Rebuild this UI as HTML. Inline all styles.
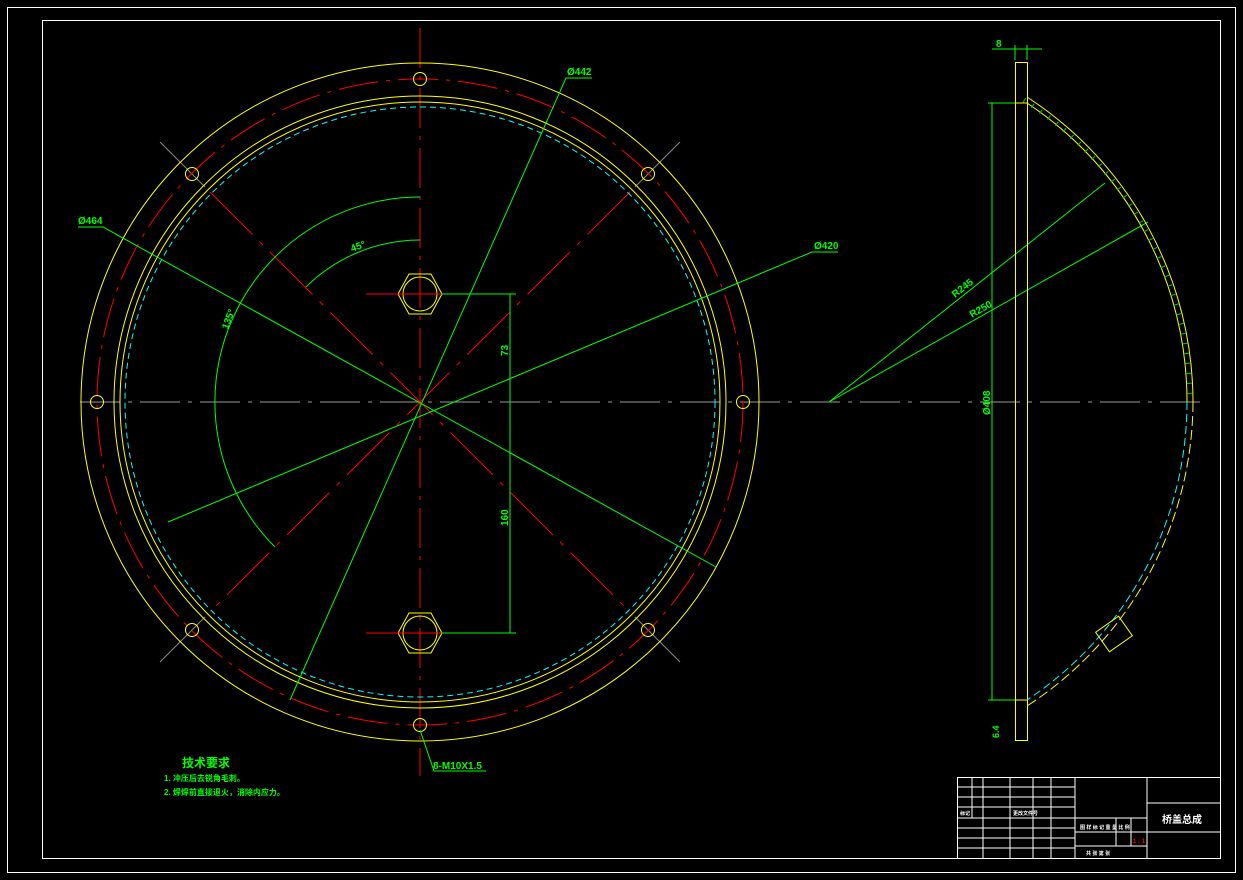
<!DOCTYPE html>
<html><head><meta charset="utf-8"><style>
html,body{margin:0;padding:0;background:#000;width:1243px;height:880px;overflow:hidden}
svg{display:block}
text{font-family:"Liberation Sans","Noto Sans CJK SC",sans-serif;font-weight:bold}
</style></head><body>
<svg width="1243" height="880" viewBox="0 0 1243 880" xmlns="http://www.w3.org/2000/svg">
<rect x="7.5" y="7.5" width="1228" height="865" fill="none" stroke="#fff" stroke-width="1"/>
<rect x="42.5" y="20.5" width="1178" height="838" fill="none" stroke="#fff" stroke-width="1"/>

<line x1="420" y1="28" x2="420" y2="776" stroke="#f00" stroke-dasharray="40,8,4,8"/>
<line x1="80" y1="402" x2="1205" y2="402" stroke="#999" stroke-dasharray="40,8,4,8"/>
<g stroke="#f00" stroke-dasharray="60,10,5,10">
<line x1="210" y1="192" x2="630" y2="612"/>
<line x1="630" y1="192" x2="210" y2="612"/>
</g>
<g stroke="#888">
<line x1="160" y1="142" x2="205" y2="187"/><line x1="680" y1="142" x2="635" y2="187"/>
<line x1="160" y1="662" x2="205" y2="617"/><line x1="680" y1="662" x2="635" y2="617"/>
</g>

<g fill="none">
<circle cx="420" cy="402" r="339" stroke="#ff0"/>
<circle cx="420" cy="402" r="323" stroke="#f00" stroke-dasharray="40,8,4,8"/>
<circle cx="420" cy="402" r="306" stroke="#ff0"/>
<circle cx="420" cy="402" r="300" stroke="#ff0"/>
<circle cx="420" cy="402" r="295" stroke="#0ff" stroke-dasharray="6,4"/>
<g stroke="#ff0">
<circle cx="420" cy="79" r="6.5"/><circle cx="648" cy="174" r="6.5"/><circle cx="743" cy="402" r="6.5"/><circle cx="648" cy="630" r="6.5"/>
<circle cx="420" cy="725" r="6.5"/><circle cx="192" cy="630" r="6.5"/><circle cx="97" cy="402" r="6.5"/><circle cx="192" cy="174" r="6.5"/>
<polygon points="409,274 431,274 442,294 431,314 409,314 398,294"/>
<circle cx="420" cy="294" r="17"/>
<polygon points="409,613 431,613 442,633 431,653 409,653 398,633"/>
<circle cx="420" cy="633" r="17"/>
</g>
</g>
<g stroke="#f00">
<line x1="366" y1="294" x2="474" y2="294"/><line x1="366" y1="633" x2="474" y2="633"/>
</g>

<g stroke="#0f0" fill="none" stroke-width="1">
<polyline points="78,227 103,227 716,567"/>
<polyline points="592,78 566,78 290,700"/>
<polyline points="838,252 812,252 168,522"/>
<path d="M420,197 A205,205 0 0 0 275,547"/>
<path d="M420,240 A162,162 0 0 0 306,287"/>
<line x1="510" y1="294" x2="510" y2="633"/>
<line x1="442" y1="294" x2="516" y2="294"/><line x1="442" y1="633" x2="516" y2="633"/>
<polyline points="420,730 434,771 486,771"/>
<line x1="992" y1="103" x2="992" y2="700"/>
<line x1="988" y1="103" x2="1015" y2="103"/><line x1="988" y1="700" x2="1015" y2="700"/>
<line x1="992" y1="49" x2="1042" y2="49"/>
<line x1="1015" y1="45" x2="1015" y2="60"/><line x1="1027" y1="45" x2="1027" y2="60"/>
<line x1="829" y1="402" x2="1105" y2="183"/>
<line x1="829" y1="402" x2="1148" y2="222"/>
</g>
<g fill="#0f0" font-size="10">
<text x="78" y="224">Ø464</text>
<text x="567" y="75">Ø442</text>
<text x="814" y="249">Ø420</text>
<text x="433" y="769">8-M10X1.5</text>
<text x="996" y="47">8</text>
<text transform="translate(352,252) rotate(-20)">45°</text>
<text transform="translate(228,330) rotate(-70)">135°</text>
<text transform="translate(508,356) rotate(-90)">73</text>
<text transform="translate(508,526) rotate(-90)">160</text>
<text transform="translate(990,415) rotate(-90)">Ø408</text>
<text transform="translate(955,298) rotate(-38)">R245</text>
<text transform="translate(972,318) rotate(-30)">R250</text>
<text transform="translate(999,738) rotate(-90)" font-size="9">6.4</text>
<text x="182" y="767" font-size="12">技术要求</text>
<text x="164" y="781" font-size="8">1. 冲压后去锐角毛刺。</text>
<text x="164" y="795" font-size="8">2. 焊焊前直接退火，消除内应力。</text>
</g>

<g fill="none" stroke="#ff0">
<rect x="1015.5" y="62.5" width="12" height="678"/>
<line x1="1015" y1="103" x2="1027" y2="103"/><line x1="1015" y1="700" x2="1027" y2="700"/>
<path d="M1027,97 A364,364 0 0 1 1193,402"/>
<path d="M1027,103 A358,358 0 0 1 1187,402"/>
<path d="M1193,402 A364,364 0 0 1 1027,706" stroke-dasharray="10,4"/>
<path d="M1187,402 A358,358 0 0 1 1027,700" stroke="#0ff" stroke-dasharray="8,4"/>
<rect x="1100" y="622" width="28" height="24" transform="rotate(-35 1114 634)"/>
</g>
<path d="M1024,100 A361,361 0 0 1 1190,402" fill="none" stroke="#0c0" stroke-width="5" stroke-dasharray="1,9"/>

<g stroke="#fff" fill="none">
<rect x="957.5" y="777.5" width="263" height="81"/>
<line x1="1075" y1="777" x2="1075" y2="858"/>
<line x1="1147" y1="777" x2="1147" y2="858"/>
<line x1="1147" y1="803" x2="1220" y2="803"/>
<line x1="1147" y1="832" x2="1220" y2="832"/>
<line x1="957" y1="787" x2="1075" y2="787"/>
<line x1="957" y1="797" x2="1075" y2="797"/>
<line x1="957" y1="807" x2="1075" y2="807"/>
<line x1="957" y1="818" x2="1075" y2="818"/>
<line x1="957" y1="828" x2="1075" y2="828"/>
<line x1="957" y1="838" x2="1075" y2="838"/>
<line x1="957" y1="848" x2="1075" y2="848"/>
<line x1="1075" y1="818" x2="1147" y2="818"/>
<line x1="1075" y1="832" x2="1147" y2="832"/>
<line x1="1075" y1="846" x2="1147" y2="846"/>
<line x1="972" y1="777" x2="972" y2="818"/>
<line x1="983" y1="777" x2="983" y2="858"/>
<line x1="1010" y1="777" x2="1010" y2="858"/>
<line x1="1033" y1="777" x2="1033" y2="858"/>
<line x1="1051" y1="777" x2="1051" y2="858"/>
<line x1="1116" y1="818" x2="1116" y2="846"/>
<line x1="1131" y1="818" x2="1131" y2="846"/>
</g>
<g fill="#fff" font-size="5">
<text x="960" y="815">标记</text><text x="1013" y="815">更改文件号</text>
<text x="1162" y="823" font-size="10">桥盖总成</text>
<text x="1080" y="829">图 样 标 记 重 量 比 例</text>
<text x="1086" y="855">共 张 第 张</text>
</g>
<text x="1133" y="843" fill="#f00" font-size="6">1 : 1</text>
</svg>
</body></html>
